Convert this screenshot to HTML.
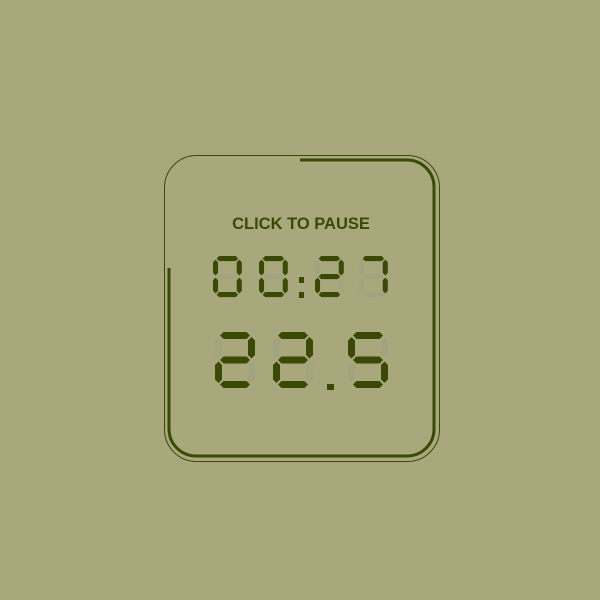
<!DOCTYPE html>
<html><head><style>
html,body{margin:0;padding:0;background:#a8a87c;width:600px;height:600px;overflow:hidden}
</style></head><body>
<svg width="600" height="600" viewBox="0 0 600 600" xmlns="http://www.w3.org/2000/svg">
<defs>
<polygon id="a" points="5,3.5 8.5,0 31.5,0 35,3.5 31.5,7 8.5,7"/>
<polygon id="g" points="5,28 8.5,24.5 31.5,24.5 35,28 31.5,31.5 8.5,31.5"/>
<polygon id="d" points="5,52.5 8.5,49 31.5,49 35,52.5 31.5,56 8.5,56"/>
<polygon id="f" points="3.5,5 7,8.5 7,23 3.5,26.5 0,23 0,8.5"/>
<polygon id="e" points="3.5,29.5 7,33 7,47.5 3.5,51 0,47.5 0,33"/>
<polygon id="b" points="36.5,5 40,8.5 40,23 36.5,26.5 33,23 33,8.5"/>
<polygon id="c" points="36.5,29.5 40,33 40,47.5 36.5,51 33,47.5 33,33"/>
<g id="off" fill="#a2a47f"><use href="#a"/><use href="#b"/><use href="#c"/><use href="#d"/><use href="#e"/><use href="#f"/><use href="#g"/></g>
<g id="d0"><use href="#off"/><g fill="#3a4a06"><use href="#a"/><use href="#b"/><use href="#c"/><use href="#d"/><use href="#e"/><use href="#f"/></g></g>
<g id="d2"><use href="#off"/><g fill="#3a4a06"><use href="#a"/><use href="#b"/><use href="#g"/><use href="#e"/><use href="#d"/></g></g>
<g id="d5"><use href="#off"/><g fill="#3a4a06"><use href="#a"/><use href="#f"/><use href="#g"/><use href="#c"/><use href="#d"/></g></g>
<g id="d7"><use href="#off"/><g fill="#3a4a06"><use href="#a"/><use href="#b"/><use href="#c"/></g></g>
</defs>
<rect x="164.5" y="155.5" width="275" height="306" rx="32" fill="none" stroke="#3a4a06" stroke-width="1"/>
<path d="M300,160 H407 A27,27 0 0 1 434,187 V429 A27,27 0 0 1 407,456 H196 A27,27 0 0 1 169,429 V268" fill="none" stroke="#3a4a06" stroke-width="3"/>
<text x="301" y="229" text-anchor="middle" font-family="Liberation Sans, Arial, sans-serif" font-weight="bold" font-size="16.5" fill="#3a4a06">CLICK TO PAUSE</text>
<g transform="translate(213,256) scale(0.72,0.735)"><use href="#d0"/></g>
<g transform="translate(259,256) scale(0.72,0.735)"><use href="#d0"/></g>
<rect x="299" y="277" width="5" height="6" fill="#3a4a06"/>
<rect x="299" y="292" width="5" height="6" fill="#3a4a06"/>
<g transform="translate(315,256) scale(0.72,0.735)"><use href="#d2"/></g>
<g transform="translate(359,256) scale(0.72,0.735)"><use href="#d7"/></g>
<g transform="translate(215,332)"><use href="#d2"/></g>
<g transform="translate(273,332)"><use href="#d2"/></g>
<rect x="327" y="384" width="7" height="6" fill="#3a4a06"/>
<g transform="translate(348,332)"><use href="#d5"/></g>
</svg>
</body></html>
